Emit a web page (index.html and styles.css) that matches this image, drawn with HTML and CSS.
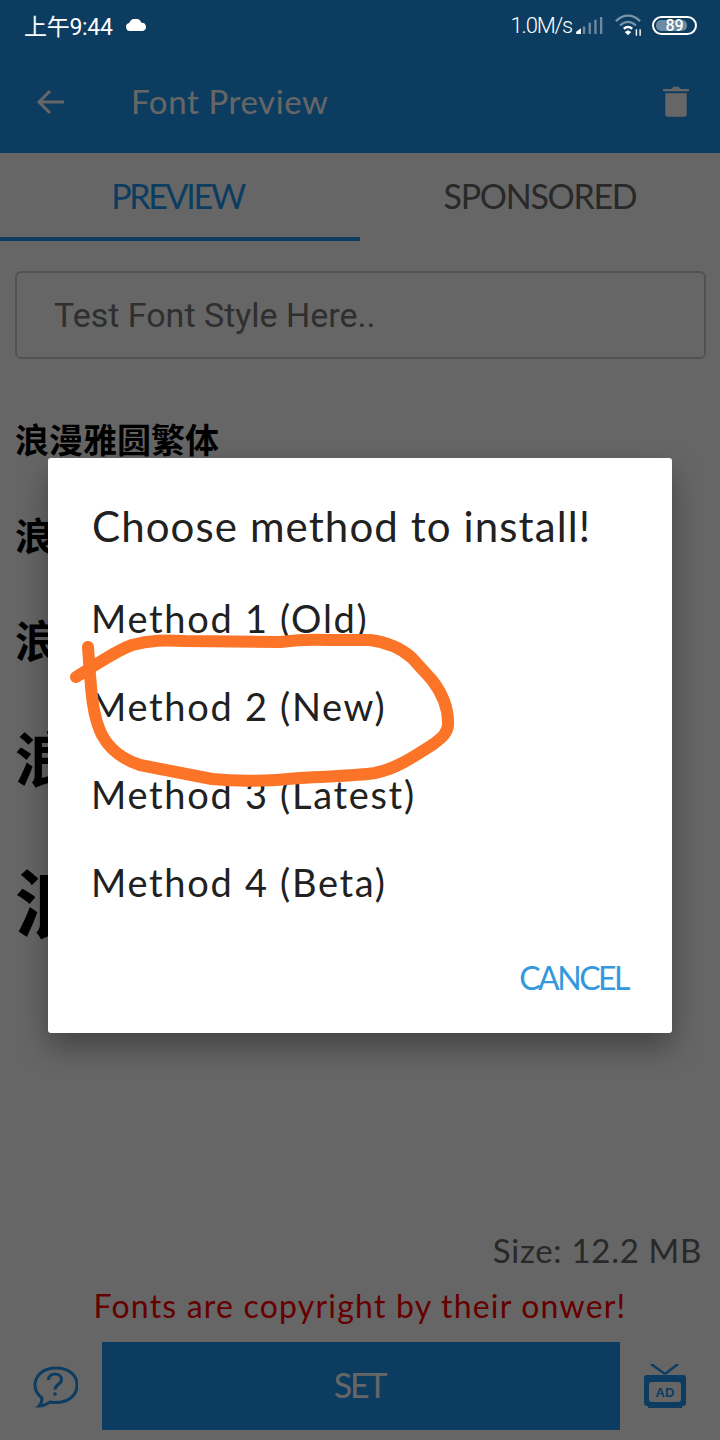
FILE: index.html
```html
<!DOCTYPE html>
<html lang="en">
<head>
<meta charset="utf-8">
<title>Font Preview</title>
<link rel="stylesheet" href="styles.css">
</head>
<body>
<div class="screen">
  <header class="appbar">
    <div class="toolbar">
      <svg class="back" viewBox="0 0 30 30"><path d="M28 15H3M14 4 3 15l11 11"/></svg>
      <span class="title">Font Preview</span>
      <svg class="trash" viewBox="0 0 28 34"><path d="M0 3.500h9.500L11 1h6l1.500 2.500H28V6H0z"/><path d="M2.500 8h23v22.500a3 3 0 0 1-3 3h-17a3 3 0 0 1-3-3z"/></svg>
    </div>
  </header>
  <nav class="tabs">
    <div class="tab active">PREVIEW</div>
    <div class="tab">SPONSORED</div>
  </nav>
  <div class="input">Test Font Style Here..</div>
  <section class="samples">
    <div class="s s1">浪漫雅圆繁体</div>
    <div class="s s2">浪漫雅圆繁体</div>
    <div class="s s3">浪漫雅圆繁体</div>
    <div class="s s4">浪漫雅圆繁体</div>
    <div class="s s5">浪漫雅圆繁体</div>
  </section>
  <div class="size">Size: 12.2 MB</div>
  <div class="copyright">Fonts are copyright by their onwer!</div>
  <footer class="actions">
    <svg class="help" viewBox="0 0 45 42"><path d="M23 2C11 2 2 9 2 19c0 6 3 10 7 13 0 3-1 6-3 8 4 0 8-2 11-4 2 .5 4 .6 6 .6 12 0 21-7 21-17.600S35 2 23 2z"/><path d="M15.500 14c0-4 3-6 6.500-6s6.500 2 6.500 5.500c0 5-6.500 5-6.500 10"/><circle class="dot" cx="22" cy="28" r="1.800"/></svg>
    <button class="set">SET</button>
    <svg class="tv" viewBox="0 0 44 45"><path class="ant" d="M22 10 8 0M22 10 35 0"/><path class="box" fill-rule="evenodd" d="M4 11h36a3 3 0 0 1 3 3v25a3 3 0 0 1-3 3h-1v2H5v-2H4a3 3 0 0 1-3-3V14a3 3 0 0 1 3-3zm5 7a3 3 0 0 0-3 3v14a3 3 0 0 0 3 3h26a3 3 0 0 0 3-3V21a3 3 0 0 0-3-3z"/><text class="ad" x="22" y="33" text-anchor="middle">AD</text></svg>
  </footer>
</div>

<div class="scrim"></div>

<div class="status">
  <div class="status-left">
    <span class="time">上午9:44</span>
    <svg class="cloud" viewBox="0 0 22 12"><path d="M5 12a4 4 0 0 1-.8-7.900A6.500 6.500 0 0 1 16.500 3.800 4.200 4.200 0 0 1 18 12z"/></svg>
  </div>
  <div class="status-right">
    <span class="speed">1.0M/s</span>
    <svg class="signal" viewBox="0 0 28 20">
      <path class="on" d="M0 19v-2.500L5 13v6z"/>
      <path class="off" d="M7 19v-8h2.500v8zM13 19V7h2.500v12zM19 19V4h2.500v15zM25 19V1h2.500v18z"/>
    </svg>
    <svg class="wifi" viewBox="0 0 30 24">
      <path class="arc-dim" d="M2 7.500C10-.5 20-.5 28 7.500M6.500 12c5.500-5 11.500-5 17 0"/>
      <path class="arc" d="M10.500 15.500c3-2.500 6-2.500 9 0"/>
      <path class="fan" d="M11.500 19 15 17l3.500 2L15 22.500z"/>
      <path class="arrows" d="M24 16v7M28 16v7"/>
    </svg>
    <div class="battery"><div class="level"></div><span>89</span></div>
  </div>
</div>

<div class="dialog" role="dialog">
  <h2 class="d-title">Choose method to install!</h2>
  <ul class="d-list">
    <li>Method 1 (Old)</li>
    <li>Method 2 (New)</li>
    <li>Method 3 (Latest)</li>
    <li>Method 4 (Beta)</li>
  </ul>
  <div class="d-actions"><span class="cancel">CANCEL</span></div>
</div>

<svg class="scribble" viewBox="0 0 720 1440"><path d="M76 677 92 667C105 659 118 650 132 645 150 640 165 640 185 641L280 642C295 640 310 639 330 640L370 640C385 642 400 647 412 658L432 680C442 693 448 708 448 722 449 732 442 738 432 745 412 758 395 769 375 773 355 776 330 776 300 778 270 781 240 782 212 779L140 765C122 759 110 750 102 735 92 715 91 690 88 647"/></svg>
</body>
</html>
```
FILE: styles.css
```css
* { box-sizing: border-box; }
html, body { margin: 0; padding: 0; }
body {
  width: 720px;
  height: 1440px;
  position: relative;
  overflow: hidden;
  background: #fff;
  font-family: "Lato", "Noto Sans CJK SC", sans-serif;
}
.screen {
  width: 720px;
  height: 1440px;
  display: flex;
  flex-direction: column;
  background: #fff;
}
.appbar {
  height: 153px;
  background: #2196f3;
  padding-top: 50px;
  flex: none;
}
.toolbar {
  height: 103px;
  display: flex;
  align-items: center;
  padding: 0 31px 0 36px;
  color: #fff;
}
.back { width: 30px; height: 30px; fill: none; stroke: #fff; stroke-width: 3; }
.title { margin: -2px 0 0 65px; font-size: 33px; flex: 1; letter-spacing: .6px; }
.trash { width: 26px; height: 33px; fill: #fff; }
.tabs { display: flex; height: 88px; flex: none; }
.tab {
  width: 360px;
  font-size: 34px;
  text-align: center;
  line-height: 86px;
  color: #666;
  letter-spacing: -1.300px;
}
.tab.active { color: #2196f3; border-bottom: 4px solid #2196f3; letter-spacing: -2.300px; padding-right: 5px; }
.input {
  margin: 30px 14px 0 15px;
  height: 88px;
  border: 2px solid #ccc;
  border-radius: 6px;
  padding-left: 37px;
  line-height: 84px;
  font-family: "Roboto", sans-serif;
  font-size: 34px;
  color: #757575;
  flex: none;
}
.samples {
  padding: 63px 0 0 15px;
  flex: 1;
  min-height: 0;
  overflow: hidden;
  color: #000;
  font-weight: 700;
  font-family: "Noto Sans CJK SC", sans-serif;
  white-space: nowrap;
}
.s { line-height: 1; }
.s1 { font-size: 34px; margin-bottom: 59px; }
.s2 { font-size: 38px; margin-bottom: 64px; }
.s3 { font-size: 44px; margin-bottom: 65px; }
.s4 { font-size: 60px; margin-bottom: 75px; }
.s5 { font-size: 76px; }
.size {
  text-align: right;
  padding-right: 18px;
  font-size: 33px;
  line-height: 40px;
  color: #666;
  letter-spacing: .7px;
}
.copyright {
  margin-top: 16px;
  text-align: center;
  font-size: 32px;
  line-height: 40px;
  color: #f00;
  letter-spacing: 1.200px;
}
.actions {
  margin: 16px 0 10px;
  height: 88px;
  display: flex;
  align-items: center;
  padding: 0 33px;
  justify-content: space-between;
  flex: none;
}
.help { width: 45px; height: 42px; fill: none; stroke: #2196f3; stroke-width: 3; margin-top: 2px; }
.help .dot { fill: #2196f3; stroke: none; }
.set {
  width: 518px;
  height: 88px;
  background: #2196f3;
  border: 0;
  padding: 0 2px 4px 0;
  color: #fff;
  font-family: inherit;
  font-size: 34px;
  letter-spacing: -2.200px;
}
.tv { width: 44px; height: 45px; }
.tv .ant { fill: none; stroke: #2196f3; stroke-width: 2.500; }
.tv .box { fill: #2196f3; }
.tv .ad { fill: #2196f3; font-size: 13px; font-weight: 700; font-family: "Liberation Sans", sans-serif; }
.scrim {
  position: absolute;
  inset: 0;
  background: rgba(0, 0, 0, .6);
}
.status {
  position: absolute;
  left: 0;
  top: 0;
  width: 720px;
  height: 50px;
  display: flex;
  align-items: center;
  justify-content: space-between;
  padding: 0 23px 0 24px;
  color: #fff;
}
.status-left, .status-right { display: flex; align-items: center; }
.time { font-size: 23px; font-family: "Roboto", "Noto Sans CJK SC", sans-serif; letter-spacing: -.3px; }
.cloud { width: 22px; height: 12px; margin-left: 12px; fill: #fff; }
.speed { font-size: 22px; font-family: "Roboto", sans-serif; font-weight: 300; letter-spacing: -1.200px; }
.signal { width: 27px; height: 19px; margin-left: 4px; }
.signal .on { fill: #fff; }
.signal .off { fill: rgba(255, 255, 255, .4); }
.wifi { width: 28px; height: 23px; margin-left: 11px; fill: none; stroke-width: 2.500; }
.wifi .arc-dim { stroke: rgba(255, 255, 255, .45); }
.wifi .arc { stroke: #fff; }
.wifi .fan { fill: #fff; stroke: none; }
.wifi .arrows { stroke: #fff; stroke-width: 1.500; }
.battery {
  position: relative;
  width: 45px;
  height: 19px;
  margin-left: 10px;
  border: 2px solid #fff;
  border-radius: 10px;
  padding: 2px;
}
.battery .level { width: 85%; height: 100%; background: rgba(255, 255, 255, .4); border-radius: 5px; }
.battery span {
  position: absolute;
  inset: 0;
  text-align: center;
  font-size: 16px;
  line-height: 15px;
  font-family: "Roboto", sans-serif;
  font-weight: 500;
}
.dialog {
  position: absolute;
  left: 48px;
  top: 458px;
  width: 624px;
  height: 575px;
  background: #fff;
  border-radius: 3px;
  padding: 44px 44px 0;
  box-shadow: 0 14px 30px rgba(0, 0, 0, .35);
  display: flex;
  flex-direction: column;
  color: #212121;
}
.d-title { margin: 0; font-size: 42px; font-weight: 400; line-height: 48px; letter-spacing: 1.100px; }
.d-list { list-style: none; margin: 24px 0 0 -1px; padding: 0; }
.d-list li { height: 88px; line-height: 88px; font-size: 38px; letter-spacing: 1.700px; }
.d-actions { margin-top: 32px; text-align: right; }
.cancel { color: #3498dc; font-size: 32px; letter-spacing: -2.500px; }
.scribble {
  position: absolute;
  inset: 0;
  width: 720px;
  height: 1440px;
  fill: none;
  stroke: #fc7428;
  stroke-width: 12;
  stroke-linecap: round;
  stroke-linejoin: round;
  pointer-events: none;
}
```
